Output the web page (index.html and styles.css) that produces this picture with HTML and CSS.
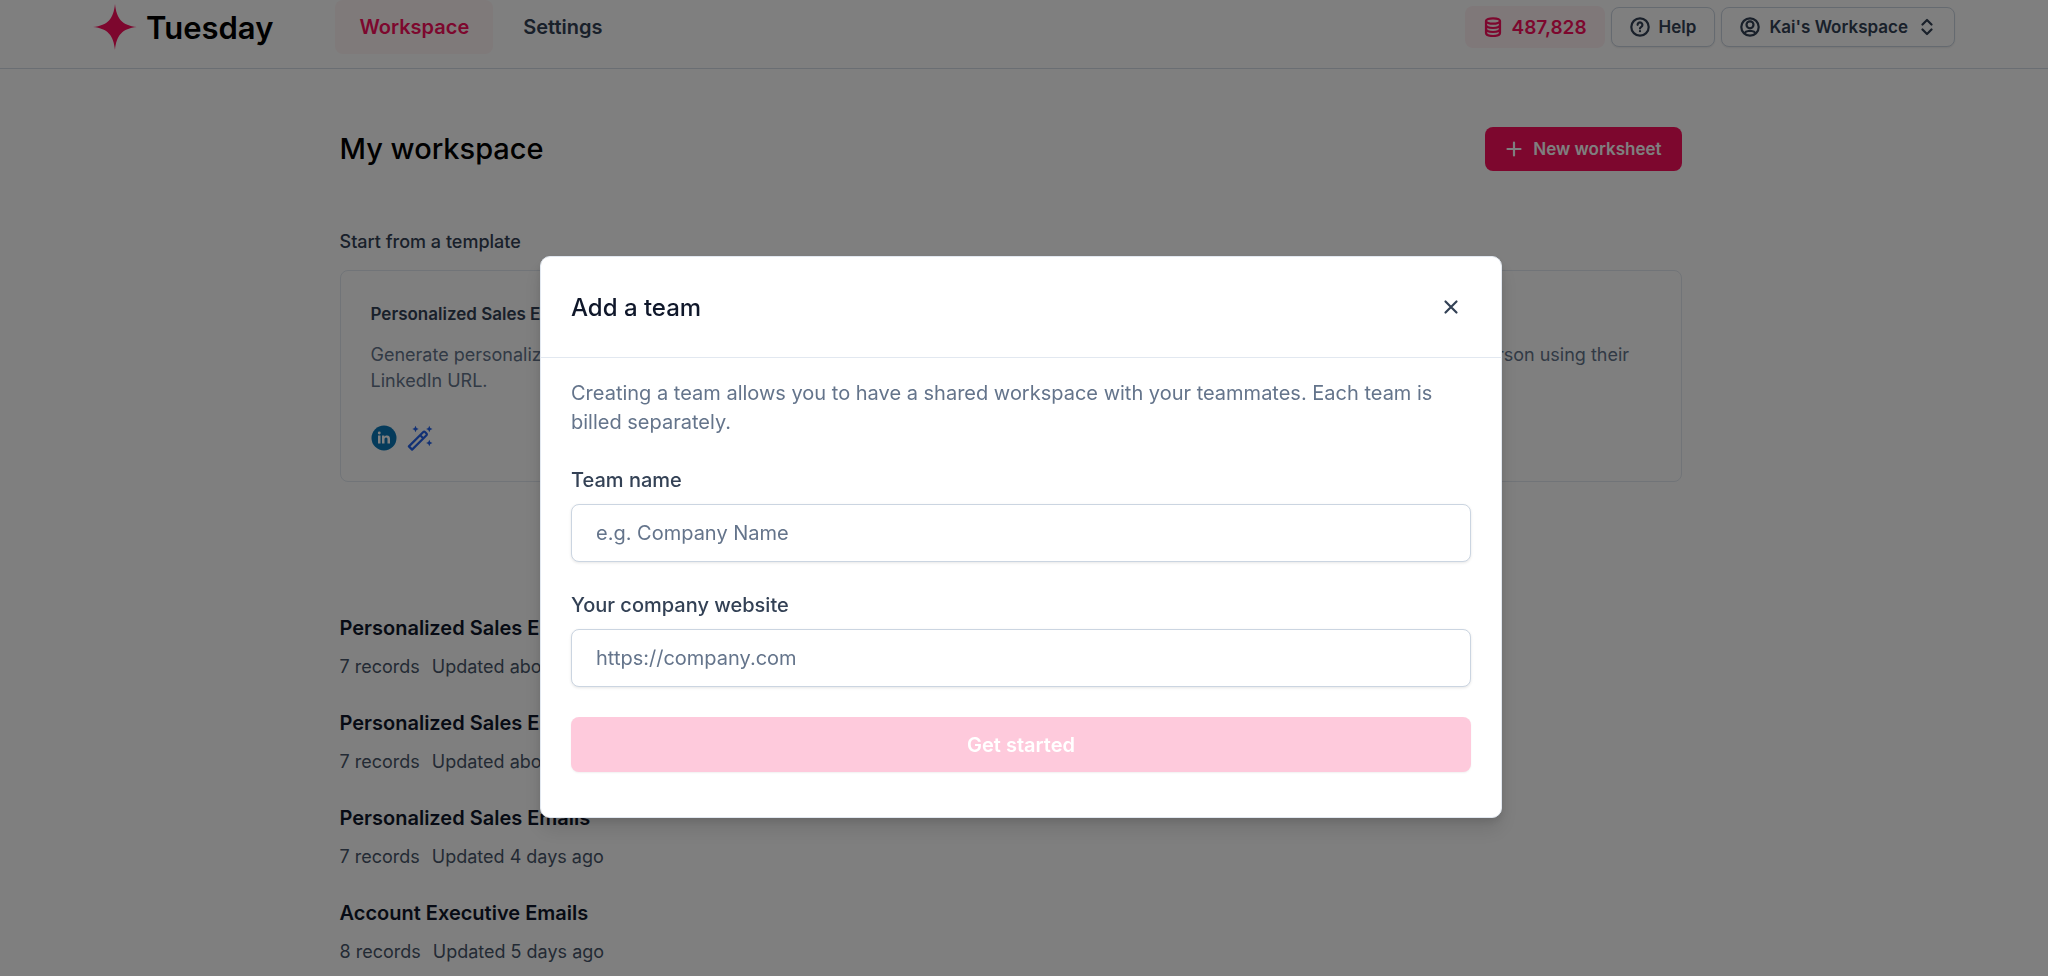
FILE: index.html
```html
<!DOCTYPE html>
<html lang="en">
<head>
<meta charset="utf-8">
<meta name="viewport" content="width=device-width, initial-scale=1">
<title>Tuesday - My workspace</title>
<link rel="stylesheet" href="styles.css">
</head>
<body>
<header class="topbar">
  <a class="brand" href="#">
    <svg class="brand-mark" viewBox="0 0 44 46" aria-hidden="true"><path d="M22 0C23.500 14.500 29 21.500 44 23C29 24.500 23.500 31.500 22 46C20.500 31.500 15 24.500 0 23C15 21.500 20.500 14.500 22 0Z"/></svg>
    <span class="brand-name">Tuesday</span>
  </a>
  <nav class="nav">
    <a class="nav-link nav-link-active" href="#">Workspace</a>
    <a class="nav-link" href="#">Settings</a>
  </nav>
  <div class="actions">
    <button class="credits" type="button">
      <svg class="icon icon-md" viewBox="0 0 20 20" aria-hidden="true"><ellipse cx="10" cy="4" rx="7" ry="2.700"/><path d="M3 4v12c0 1.700 3.100 3 7 3s7-1.300 7-3V4M3 8c0 1.700 3.100 3 7 3s7-1.300 7-3M3 12c0 1.700 3.100 3 7 3s7-1.300 7-3"/></svg>
      487,828
    </button>
    <button class="outline-btn" type="button">
      <svg class="icon icon-md" viewBox="0 0 20 20" aria-hidden="true"><circle cx="10" cy="10" r="8.700"/><path d="M7.600 7.800a2.400 2.400 0 1 1 3.700 2c-.8.500-1.300.9-1.300 1.700M10 14v.2"/></svg>
      Help
    </button>
    <button class="outline-btn outline-btn-wide" type="button">
      <svg class="icon icon-md" viewBox="0 0 20 20" aria-hidden="true"><circle cx="10" cy="10" r="8.700"/><circle cx="10" cy="7.800" r="3.500"/><path d="M4.500 16.200c.9-1.700 2.300-2.200 3.800-2.200h3.400c1.500 0 2.900.5 3.800 2.200"/></svg>
      Kai's Workspace
      <svg class="icon icon-chevrons" viewBox="0 0 12 18" aria-hidden="true"><path d="M1.500 6.500 6 2l4.500 4.500M1.500 11.500 6 16l4.500-4.500"/></svg>
    </button>
  </div>
</header>

<main class="page">
  <div class="page-head">
    <h1 class="page-title">My workspace</h1>
    <button class="primary-btn" type="button">
      <svg class="icon icon-plus" viewBox="0 0 16 16" aria-hidden="true"><path d="M8 1.500v13M1.500 8h13"/></svg>
      New worksheet
    </button>
  </div>

  <section class="templates">
    <h2 class="section-label">Start from a template</h2>
    <a class="card" href="#">
      <div class="card-col">
        <h3 class="card-title">Personalized Sales Emails</h3>
        <p class="card-text">Generate personalized cold sales emails for a person using their LinkedIn URL.</p>
        <div class="card-icons">
          <svg class="card-icon" viewBox="0 0 26 26" aria-hidden="true"><circle class="in-disc" cx="13" cy="13" r="12.500"/><path class="in-mark" d="M7 10.600h2.500v8H7zM11 10.600h2.400v1.200c.5-.9 1.400-1.400 2.600-1.400 2.300 0 3 1.500 3 3.600v4.600h-2.500v-4.100c0-1.200-.2-2.100-1.400-2.100-1.300 0-1.600 1-1.600 2.100v4.100H11z"/><circle class="in-mark" cx="8.250" cy="8" r="1.450"/></svg>
          <svg class="card-icon" viewBox="0 0 26 26" aria-hidden="true"><path class="wand" d="M1.900 21.400 16.300 7a1.200 1.200 0 0 1 1.700 0l1.500 1.500a1.200 1.200 0 0 1 0 1.700L5.100 24.600zM13.200 10.300l3 3"/><path class="spark" d="M8.500.8 9.500 3l2.200 1-2.200 1-1 2.200-1-2.200-2.200-1L7.500 3zM22.300.8l1 2.200 2.200 1-2.200 1-1 2.200-1-2.200-2.200-1 2.200-1zM22.300 14.800l1 2.200 2.200 1-2.200 1-1 2.200-1-2.200-2.200-1 2.200-1z"/></svg>
        </div>
      </div>
      <div class="card-col">
        <h3 class="card-title">Personalized Recruiting Emails for Every Career Level</h3>
        <p class="card-text">Generate personalized recruiting messages for a person using their LinkedIn URL.</p>
      </div>
    </a>
  </section>

  <ul class="sheets">
    <li class="sheet"><a class="sheet-title" href="#">Personalized Sales Emails</a><p class="sheet-meta"><span>7 records</span><span>Updated about 4 hours ago</span></p></li>
    <li class="sheet"><a class="sheet-title" href="#">Personalized Sales Emails</a><p class="sheet-meta"><span>7 records</span><span>Updated about 4 hours ago</span></p></li>
    <li class="sheet"><a class="sheet-title" href="#">Personalized Sales Emails</a><p class="sheet-meta"><span>7 records</span><span>Updated 4 days ago</span></p></li>
    <li class="sheet"><a class="sheet-title" href="#">Account Executive Emails</a><p class="sheet-meta"><span>8 records</span><span>Updated 5 days ago</span></p></li>
  </ul>
</main>

<div class="overlay">
  <form class="dialog" role="dialog" aria-modal="true" aria-labelledby="dialog-title">
    <div class="dialog-head">
      <h2 class="dialog-title" id="dialog-title">Add a team</h2>
      <button class="close-btn" type="button" aria-label="Close"><svg class="icon icon-close" viewBox="0 0 16 16" aria-hidden="true"><path d="m2.500 2.500 11 11M13.500 2.500l-11 11"/></svg></button>
    </div>
    <div class="dialog-body">
      <p class="dialog-text">Creating a team allows you to have a shared workspace with your teammates. Each team is billed separately.</p>
      <div class="field">
        <label class="field-label" for="team">Team name</label>
        <input class="field-input" id="team" type="text" placeholder="e.g. Company Name">
      </div>
      <div class="field">
        <label class="field-label" for="site">Your company website</label>
        <input class="field-input" id="site" type="text" placeholder="https://company.com">
      </div>
      <button class="submit-btn" type="submit" disabled>Get started</button>
    </div>
  </form>
</div>
</body>
</html>
```
FILE: styles.css
```css
* { box-sizing: border-box; }

body {
  margin: 0;
  height: 100vh;
  overflow: hidden;
  background: #fff;
  color: #334155;
  font-family: Inter, "Liberation Sans", sans-serif;
  font-size: 18px;
}

h1, h2, h3, p, ul { margin: 0; padding: 0; }
a { color: inherit; text-decoration: none; }
button, input { font: inherit; }

.icon {
  flex: none;
  fill: none;
  stroke: currentColor;
  stroke-width: 2.200;
  stroke-linecap: round;
  stroke-linejoin: round;
}
.icon-md { width: 20px; height: 20px; }
.icon-plus { width: 16px; height: 16px; }
.icon-close { width: 16px; height: 16px; }
.icon-chevrons { width: 12px; height: 18px; margin-left: 4px; }

/* Top bar */
.topbar {
  display: flex;
  align-items: flex-start;
  height: 69px;
  padding: 0 93px;
  border-bottom: 1px solid #d5dce6;
}
.brand { display: flex; align-items: center; gap: 9px; height: 54px; }
.brand-mark { width: 44px; height: 46px; fill: #fa0f5c; }
.brand-name { color: #000; font-size: 31px; font-weight: 600; }
.nav { display: flex; gap: 6px; margin-left: 62px; }
.nav-link {
  display: flex;
  align-items: center;
  height: 54px;
  padding: 0 24px;
  border-radius: 8px;
  font-size: 20px;
  font-weight: 600;
}
.nav-link-active { background: #fff4f4; color: #fa0f5c; }
.actions { display: flex; align-items: center; gap: 6px; height: 54px; margin-left: auto; }
.credits, .outline-btn {
  display: flex;
  align-items: center;
  gap: 9px;
  height: 40px;
  padding: 0 18px;
  border: 1px solid #cbd5e1;
  border-radius: 8px;
  background: #fff;
  color: #334155;
  font-size: 17px;
  font-weight: 600;
  box-shadow: 0 1px 2px rgba(0, 0, 0, .08);
}
.outline-btn-wide { padding-right: 21px; }
.credits {
  height: 42px;
  border: 0;
  background: #fff0f3;
  color: #fa0f5c;
  font-size: 19px;
  box-shadow: none;
}

/* Workspace page */
.page { max-width: 1369px; margin: 0 auto; padding-right: 27px; }
.page-head { display: flex; align-items: center; justify-content: space-between; padding-top: 58px; }
.page-title { color: #000; font-size: 29px; font-weight: 500; line-height: 44px; }
.primary-btn {
  display: flex;
  align-items: center;
  gap: 11px;
  height: 44px;
  padding: 0 20px 0 21px;
  border: 0;
  border-radius: 8px;
  background: #fa0f5c;
  color: #fff;
  font-size: 17px;
  font-weight: 600;
}
.templates { margin-top: 58px; }
.section-label { font-size: 18px; font-weight: 500; line-height: 26px; }
.card {
  display: grid;
  grid-template-columns: 1fr 1fr;
  gap: 92px;
  margin-top: 15px;
  padding: 30px;
  border: 1px solid #e2e8f0;
  border-radius: 8px;
}
.card-title { font-size: 17px; font-weight: 600; line-height: 26px; }
.card-text { margin-top: 15px; color: #64748b; line-height: 26px; }
.card-icons { display: flex; gap: 10px; margin-top: 31px; }
.card-icon { width: 26px; height: 26px; }
.in-disc { fill: #0a76b6; }
.in-mark { fill: #fff; }
.wand { fill: none; stroke: #2563eb; stroke-width: 2.200; stroke-linejoin: round; }
.spark { fill: #2563eb; }
.sheets { list-style: none; margin-top: 132px; display: grid; gap: 29px; }
.sheet-title { color: #0f172a; font-size: 20px; font-weight: 600; line-height: 28px; }
.sheet-meta { display: flex; gap: 12px; margin-top: 12px; color: #475569; line-height: 26px; }

/* Dialog */
.overlay {
  position: fixed;
  inset: 0;
  display: flex;
  align-items: center;
  justify-content: center;
  padding: 98px 6px 0 0;
  background: rgba(0, 0, 0, .5);
}
.dialog {
  width: 100%;
  max-width: 962px;
  border: 1px solid #e2e8f0;
  border-radius: 10px;
  background: #fff;
  box-shadow: 0 12px 20px rgba(0, 0, 0, .1), 0 4px 8px rgba(0, 0, 0, .1);
}
.dialog-head {
  display: flex;
  align-items: center;
  justify-content: space-between;
  height: 101px;
  padding: 0 30px;
  border-bottom: 1px solid #e2e8f0;
}
.dialog-title { color: #0f172a; font-size: 24px; font-weight: 500; }
.close-btn {
  display: flex;
  align-items: center;
  justify-content: center;
  width: 40px;
  height: 40px;
  padding: 0;
  border: 0;
  background: none;
  color: #334155;
}
.dialog-body { padding: 21px 30px 45px; }
.dialog-text { color: #64748b; font-size: 20px; line-height: 29px; }
.field { display: flex; flex-direction: column; gap: 10px; margin-top: 29px; }
.field-label { font-size: 20px; font-weight: 500; line-height: 28px; }
.field-input {
  width: 100%;
  height: 58px;
  padding: 0 24px;
  border: 1px solid #cbd5e1;
  border-radius: 8px;
  background: #fff;
  color: #334155;
  font-size: 20px;
  box-shadow: 0 1px 3px rgba(0, 0, 0, .1);
}
.field-input::placeholder { color: #64748b; opacity: 1; }
.submit-btn {
  width: 100%;
  height: 55px;
  margin-top: 30px;
  border: 0;
  border-radius: 8px;
  background: #fecadc;
  color: #fff;
  font-size: 20px;
  font-weight: 600;
  box-shadow: 0 1px 2px rgba(0, 0, 0, .06);
}
```
